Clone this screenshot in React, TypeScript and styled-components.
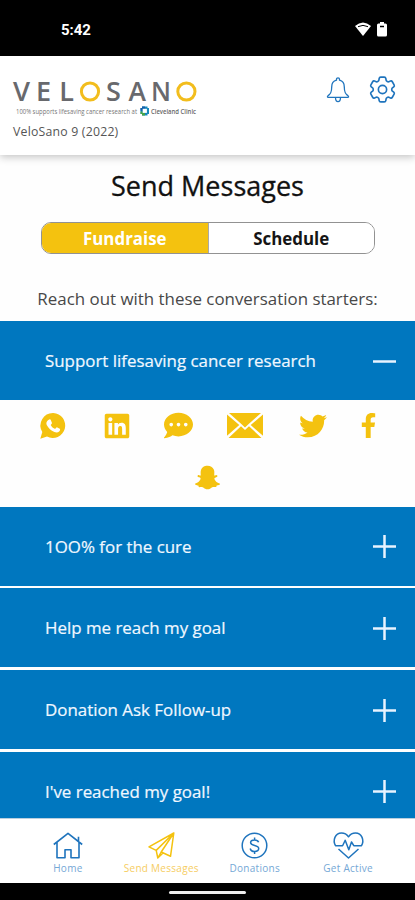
import React from 'react';
import styled, { createGlobalStyle } from 'styled-components';
import { FaLinkedin, FaCommentDots, FaTwitter, FaFacebookF, FaSnapchatGhost } from 'react-icons/fa';
import { HiOutlineCog6Tooth } from 'react-icons/hi2';

const BLUE = '#0077bf';
const GOLD = '#f4c20f';
const LINE_BLUE = '#1f74bd';

const GlobalStyle = createGlobalStyle`
  * { box-sizing: border-box; }
  body { margin: 0; background: #fff; font-family: "Open Sans", "Noto Sans", sans-serif; }
  button { font: inherit; border: 0; padding: 0; margin: 0; background: none; }
  svg { display: block; flex: none; overflow: visible; }
`;

const Screen = styled.div`
  width: 415px;
  height: 900px;
  display: flex;
  flex-direction: column;
  overflow: hidden;
  background: #fefefe;
`;

const StatusBar = styled.div`
  height: 55.5px;
  flex: none;
  display: flex;
  align-items: center;
  justify-content: space-between;
  padding: 4px 28px 0 61px;
  background: #000;
  color: #fff;
`;

const Clock = styled.span`
  font: 700 15px/20px Roboto, sans-serif;
  letter-spacing: -0.1px;
`;

const StatusIcons = styled.div`
  display: flex;
  gap: 6px;
  align-items: center;
`;

const Header = styled.header`
  height: 99.5px;
  flex: none;
  display: flex;
  justify-content: space-between;
  padding: 21px 16px 0 12px;
  background: #fff;
  box-shadow: 0 2px 8px rgba(0, 0, 0, 0.24);
  z-index: 1;
`;

const Campaign = styled.div`
  margin: 2px 0 0 1px;
  font-size: 12.3px;
  line-height: 16px;
  letter-spacing: 0.2px;
  color: #555;
`;

const HeaderActions = styled.div`
  display: flex;
  align-items: flex-start;
  gap: 16px;
  color: ${LINE_BLUE};
`;

const SettingsIcon = styled(HiOutlineCog6Tooth)`
  margin-top: -3.5px;
`;

const Main = styled.main`
  flex: 1;
  min-height: 0;
  overflow: hidden;
  display: flex;
  flex-direction: column;
`;

const Title = styled.h1`
  margin: 12.5px 0 0;
  text-align: center;
  font-size: 27px;
  line-height: 36px;
  font-weight: 400;
  color: #111;
  -webkit-text-stroke: 0.3px #111;
`;

const Segmented = styled.div`
  width: 334px;
  height: 32px;
  flex: none;
  margin: 18.5px 0 0 41px;
  display: flex;
  border: 1px solid #929292;
  border-radius: 10px;
  overflow: hidden;
`;

const Segment = styled.button<{ $active?: boolean }>`
  flex: 1;
  padding-top: 1px;
  font-size: 16.9px;
  line-height: 30px;
  font-weight: 700;
  color: ${p => (p.$active ? '#fff' : '#151515')};
  background: ${p => (p.$active ? GOLD : '#fff')};
  border-right: ${p => (p.$active ? '1px solid #a9a9a9' : '0')};
`;

const Prompt = styled.p`
  margin: 33px 0 11px;
  text-align: center;
  font-size: 16.9px;
  line-height: 23px;
  color: #484848;
`;

const AccordionRow = styled.button<{ $gap?: boolean }>`
  height: 79px;
  flex: none;
  margin-bottom: ${p => (p.$gap ? 2.75 : 0)}px;
  padding: 1px 19px 0 45px;
  display: flex;
  align-items: center;
  justify-content: space-between;
  background: ${BLUE};
  color: #f0f7ff;
  font-size: 16.9px;
  text-align: left;
`;

const RowLabel = styled.span`
  white-space: nowrap;
  padding-bottom: 1px;
  -webkit-text-stroke: 0.2px #f0f7ff;
`;

const ShareGrid = styled.div`
  height: 106.5px;
  flex: none;
  padding: 11px 22px 0 21px;
  color: ${GOLD};
`;

const ShareLine = styled.div`
  height: 28px;
  display: grid;
  grid-template-columns: 63px 65.5px 58px 75px 61.5px 49px;
  align-items: center;
  justify-items: center;
`;

const LastShare = styled.div`
  display: flex;
  justify-content: center;
  margin-top: 25.5px;
`;

const TabBar = styled.nav`
  height: 65px;
  flex: none;
  display: grid;
  grid-template-columns: repeat(4, 93.4px);
  justify-content: center;
  padding-left: 1px;
  background: #fff;
  border-top: 1px solid #b9cfdf;
`;

const Tab = styled.div<{ $active?: boolean }>`
  display: flex;
  flex-direction: column;
  align-items: center;
  padding-top: 13px;
  color: ${p => (p.$active ? GOLD : LINE_BLUE)};
`;

const TabLabel = styled.span<{ $active?: boolean }>`
  margin-top: 2px;
  font-size: 10px;
  line-height: 14px;
  letter-spacing: 0.28px;
  white-space: nowrap;
  color: ${p => (p.$active ? '#f6cd62' : '#75a8d6')};
`;

const GestureBar = styled.div`
  height: 17px;
  flex: none;
  padding-top: 8px;
  background: #000;
`;

const GestureHandle = styled.div`
  width: 77px;
  height: 3px;
  margin: 0 auto;
  border-radius: 2px;
  background: #eee;
`;

const Logo = () => (
  <svg width="188" height="45" viewBox="12 76 188 45" role="img" aria-label="VeloSano">
    <g fontFamily="Open Sans" fontSize="27" fontWeight="600" fill="#68696d">
      <text x="13" y="100" textLength="17" lengthAdjust="spacingAndGlyphs">V</text>
      <text x="36" y="100">E</text>
      <text x="59.2" y="100">L</text>
      <text x="106" y="100">S</text>
      <text x="128.500" y="100" textLength="17.5" lengthAdjust="spacingAndGlyphs">A</text>
      <text x="151" y="100" textLength="20" lengthAdjust="spacingAndGlyphs">N</text>
    </g>
    <circle cx="90" cy="90.500" r="8.600" fill="none" stroke="#f2bd1d" strokeWidth="3" />
    <circle cx="186.400" cy="90.500" r="8.600" fill="none" stroke="#f2bd1d" strokeWidth="3" />
    <text x="16" y="112.600" fontFamily="Open Sans" fontSize="6.600" fill="#777" textLength="121" lengthAdjust="spacingAndGlyphs">100% supports lifesaving cancer research at</text>
    <path d="M140.500 107h1.500v-1.400h5.500v1.400h1.500v6h-1.500v1.400H142V113h-1.500z" fill="#1689bd" />
    <path d="M140.500 110.500v2.500h1.500v1.400h3v-2.500h-2.300v-1.400z" fill="#47a449" />
    <path d="M140.500 107h1.500v-1.400h3v2.200h-2.300v2h-2.200z" fill="#145eaa" />
    <path d="M142.700 107.800h4.200v4.100h-4.200z" fill="#fff" />
    <text x="151" y="112.600" fontFamily="Open Sans" fontSize="6.600" fontWeight="600" fill="#666" textLength="45" lengthAdjust="spacingAndGlyphs">Cleveland Clinic</text>
  </svg>
);

const WifiIcon = () => (
  <svg width="16" height="15" viewBox="0 0 16 15">
    <path d="M0 4Q8-3 16 4L8 14z" fill="#fff" />
    <path d="M3 4.700Q8 2 13 4.700" fill="none" stroke="#000" strokeWidth="1" />
  </svg>
);

const BatteryIcon = () => (
  <svg width="10" height="15" viewBox="0 0 10 15">
    <path d="M3 0h4v1.500h1.500q1.500 0 1.500 1.500v10q0 1.500-1.500 1.500h-7Q0 14.500 0 13V3Q0 1.500 1.500 1.500H3z" fill="#fff" />
    <path d="M3 4.500h4" stroke="#000" strokeWidth="1.500" />
  </svg>
);

const BellIcon = () => (
  <svg width="24" height="26" viewBox="0 0 24 26" fill="none" stroke="currentColor" strokeWidth="1.300" strokeLinejoin="round">
    <path d="M10.500 3.200V2.300a1.500 1.500 0 0 1 3 0v.9C17 4 18.300 6.500 18.300 10c0 5.200.9 6.800 3.600 8.600q1.500 1.700-.3 1.700H2.400q-1.800 0-.3-1.700C4.800 16.800 5.700 15.200 5.700 10c0-3.500 1.300-6 4.800-6.800zM9.500 20.800c.2 5.200 4.800 5.200 5 0" />
  </svg>
);

const WhatsappIcon = () => (
  <svg width="26" height="26" viewBox="0 0 26 26">
    <path d="M13.300 0A12.500 12.500 0 1 1 7 23.600L.3 25.700l2-6.700A12.500 12.500 0 0 1 13.300 0z" fill="currentColor" />
    <path d="M9.300 6.500c.8-.4 1.300-.1 1.600.7l1 2.500c.3.900-.8 1.600-1.200 2.200.9 2 2.500 3.200 4.500 4 .7-.6 1.300-1.900 2.100-1.500l2.500 1.300c.7.500.1 1.900-.4 2.500-1.300 1.300-3 1.600-5 .8-3.500-1.300-6-3.800-7.500-6.700-1-2-.6-4.500 2.400-5.800z" fill="#fff" />
  </svg>
);

const EnvelopeIcon = () => (
  <svg width="36" height="25" viewBox="0 0 36 25" fill="currentColor">
    <path d="M2 0h32L21.400 11.200 18 14.400l-3.400-3.200zM0 1.500 12.300 12 0 22.800zM36 1.500v21.300L23.700 12zM14 13.300l4 3.600 4-3.600L34.500 25h-33z" />
  </svg>
);

const ToggleIcon = ({ open }: { open?: boolean }) => (
  <svg width="23" height="23" viewBox="0 0 23 23" stroke="#e8f3ff" strokeWidth="2.500">
    <path d={open ? 'M0 11.500h23' : 'M0 11.500h23M11.500 0v23'} />
  </svg>
);

const HomeIcon = () => (
  <svg width="30" height="27" viewBox="0 0 30 27" fill="none" stroke="currentColor" strokeWidth="1.600" strokeLinejoin="round">
    <path d="M.8 12.500 15 1.300l14.200 11.200M25.500 9.500V4.700M4 10.500v15.300h8v-8h6v8h8V10.500" />
  </svg>
);

const PlaneIcon = () => (
  <svg width="27" height="27" viewBox="0 0 27 27" fill="none" stroke="currentColor" strokeWidth="1.500" strokeLinejoin="round">
    <path d="M25.800 1 1 14.800l7.200 3.600L25.800 1 22.500 24.300l-9.300-4.300zM8.200 18.400 9.800 26l3.400-6L25.800 1M9.800 26l5.200-5" />
  </svg>
);

const DollarIcon = () => (
  <svg width="27" height="27" viewBox="0 0 27 27" fill="none" stroke="currentColor" strokeWidth="1.500">
    <circle cx="13.500" cy="13.500" r="12.300" />
    <path d="M17.600 10.200C17 8.500 15.500 7.900 13.600 7.900c-2.400 0-4 1-4 2.700 0 4 8.100 1.900 8.100 6 0 1.800-1.800 2.900-4.100 2.900-2.400 0-4-1-4.400-3M13.600 5.500v3M13.600 19v3" />
  </svg>
);

const HeartPulseIcon = () => (
  <svg width="31" height="27" viewBox="0 0 31 27" fill="none" stroke="currentColor" strokeWidth="1.500" strokeLinejoin="round">
    <path d="M2.500 13.700C-.5 8.500 2 1 8.500 1c3.500 0 5.500 1.600 7 3.800C17 2.600 19 1 22.500 1 29 1 31.500 8.500 28.500 13.700h-7.700L18.500 10l-2.700 7.800-3.600-9.600-2.600 5.500zM5.500 17l10 9 10-9" />
  </svg>
);

const closedRows = [
  '1OO% for the cure',
  'Help me reach my goal',
  'Donation Ask Follow-up',
  "I've reached my goal!",
];

const tabs = [
  { label: 'Home', Icon: HomeIcon },
  { label: 'Send Messages', Icon: PlaneIcon, active: true },
  { label: 'Donations', Icon: DollarIcon },
  { label: 'Get Active', Icon: HeartPulseIcon },
];

export default function App() {
  return (
    <>
      <GlobalStyle />
      <Screen>
        <StatusBar>
          <Clock>5:42</Clock>
          <StatusIcons><WifiIcon /><BatteryIcon /></StatusIcons>
        </StatusBar>
        <Header>
          <div>
            <Logo />
            <Campaign>VeloSano 9 (2022)</Campaign>
          </div>
          <HeaderActions>
            <BellIcon />
            <SettingsIcon size={33} strokeWidth={1.2} />
          </HeaderActions>
        </Header>
        <Main>
          <Title>Send Messages</Title>
          <Segmented>
            <Segment $active>Fundraise</Segment>
            <Segment>Schedule</Segment>
          </Segmented>
          <Prompt>Reach out with these conversation starters:</Prompt>
          <AccordionRow>
            <RowLabel>Support lifesaving cancer research</RowLabel>
            <ToggleIcon open />
          </AccordionRow>
          <ShareGrid>
            <ShareLine>
              <WhatsappIcon />
              <FaLinkedin size={28} />
              <FaCommentDots size={29} />
              <EnvelopeIcon />
              <FaTwitter size={28} />
              <FaFacebookF size={25} />
            </ShareLine>
            <LastShare><FaSnapchatGhost size={25} /></LastShare>
          </ShareGrid>
          {closedRows.map(label => (
            <AccordionRow key={label} $gap>
              <RowLabel>{label}</RowLabel>
              <ToggleIcon />
            </AccordionRow>
          ))}
        </Main>
        <TabBar>
          {tabs.map(({ label, Icon, active }) => (
            <Tab key={label} $active={active}>
              <Icon />
              <TabLabel $active={active}>{label}</TabLabel>
            </Tab>
          ))}
        </TabBar>
        <GestureBar><GestureHandle /></GestureBar>
      </Screen>
    </>
  );
}
